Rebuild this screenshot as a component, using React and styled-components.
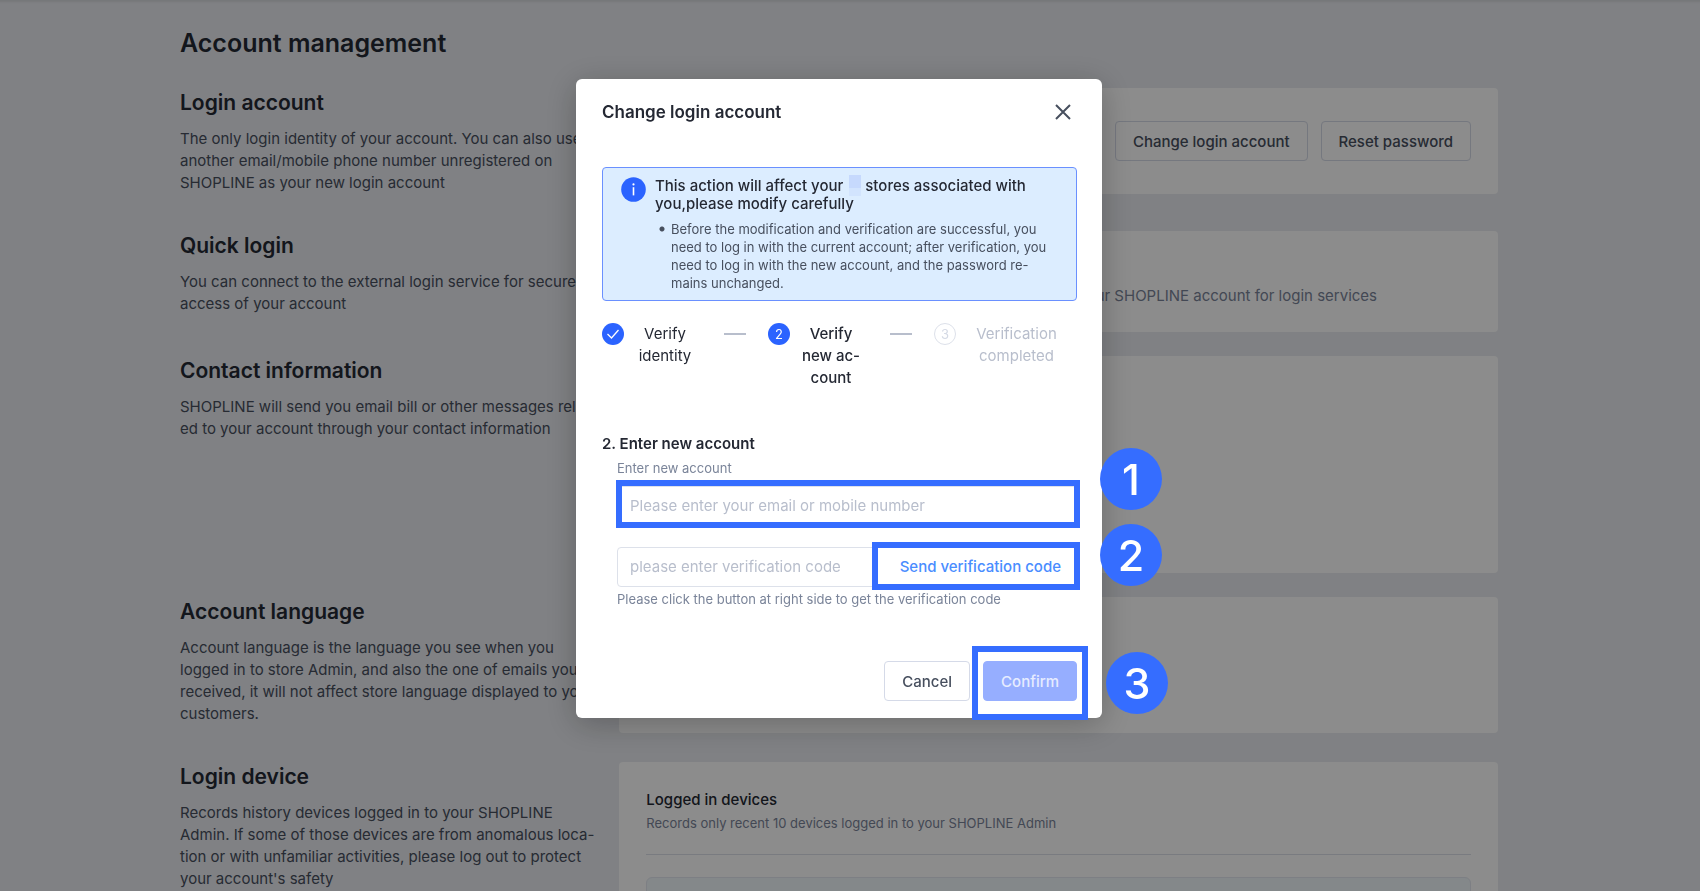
import styled, { createGlobalStyle, css } from "styled-components";

const sections = [
  {
    title: "Login account",
    lines: [
      "The only login identity of your account. You can also use",
      "another email/mobile phone number unregistered on",
      "SHOPLINE as your new login account",
    ],
    content: "login",
    height: 106,
  },
  {
    title: "Quick login",
    lines: [
      "You can connect to the external login service for secure",
      "access of your account",
    ],
    content: "quick",
    height: 101,
  },
  {
    title: "Contact information",
    lines: [
      "SHOPLINE will send you email bill or other messages relat-",
      "ed to your account through your contact information",
    ],
    height: 217,
  },
  {
    title: "Account language",
    lines: [
      "Account language is the language you see when you",
      "logged in to store Admin, and also the one of emails you",
      "received, it will not affect store language displayed to your",
      "customers.",
    ],
    height: 136,
  },
  {
    title: "Login device",
    lines: [
      "Records history devices logged in to your SHOPLINE",
      "Admin. If some of those devices are from anomalous loca-",
      "tion or with unfamiliar activities, please log out to protect",
      "your account's safety",
    ],
    content: "devices",
    height: 320,
  },
];

const steps = [
  { label: "Verify\nidentity", status: "done" },
  { label: "Verify\nnew ac-\ncount", status: "active" },
  { label: "Verification\ncompleted", status: "waiting" },
];

const CardContent = ({ type }) => {
  if (type === "login") {
    return (
      <CardActions>
        <Button type="button">Change login account</Button>
        <Button type="button">Reset password</Button>
      </CardActions>
    );
  }
  if (type === "quick") {
    return (
      <ServiceText>
        Connect an external account to your SHOPLINE account for login services
      </ServiceText>
    );
  }
  if (type === "devices") {
    return (
      <>
        <DevicesTitle>Logged in devices</DevicesTitle>
        <DevicesText>
          Records only recent 10 devices logged in to your SHOPLINE Admin
        </DevicesText>
        <Divider />
        <DevicesBox />
      </>
    );
  }
  return null;
};

const ChangeAccountModal = () => (
  <Modal role="dialog" aria-modal="true" aria-labelledby="modal-title">
    <ModalHeader>
      <ModalTitle id="modal-title">Change login account</ModalTitle>
      <CloseButton type="button" aria-label="Close">
        <svg width="16" height="16" viewBox="0 0 16 16" fill="none">
          <path d="M1 1l14 14M15 1L1 15" stroke="#474f5e" strokeWidth="2" />
        </svg>
      </CloseButton>
    </ModalHeader>
    <Alert>
      <svg width="25" height="25" viewBox="0 0 25 25" fill="none">
        <circle cx="12.5" cy="12.5" r="12.3" fill="#2b63ff" />
        <circle cx="12.5" cy="7.4" r="1.1" fill="#fff" />
        <path d="M12.5 10.2v8.2" stroke="#fff" strokeWidth="1.6" />
      </svg>
      <div>
        <AlertTitle>
          This action will affect your <Redacted /> stores associated with
          <br />
          you,please modify carefully
        </AlertTitle>
        <AlertList>
          <li>
            Before the modification and verification are successful, you
            <br />
            need to log in with the current account; after verification, you
            <br />
            need to log in with the new account, and the password re-
            <br />
            mains unchanged.
          </li>
        </AlertList>
      </div>
    </Alert>
    <Steps>
      {steps.map(({ label, status }, index) => (
        <Step key={label}>
          <StepIcon $status={status}>
            {status === "done" ? (
              <svg width="14" height="12" viewBox="0 0 14 12" fill="none">
                <path d="M1.5 6l4 4L12.5 2" stroke="#fff" strokeWidth="1.3" />
              </svg>
            ) : (
              index + 1
            )}
          </StepIcon>
          <StepLabel $status={status}>{label}</StepLabel>
          {index < steps.length - 1 && <StepLine />}
        </Step>
      ))}
    </Steps>
    <FormTitle>2. Enter new account</FormTitle>
    <Form>
      <Label htmlFor="account">Enter new account</Label>
      <Field>
        <Input
          id="account"
          type="text"
          placeholder="Please enter your email or mobile number"
        />
        <Frame $inset="-6px -3px -2px -1px" />
        <Marker $top={-38} $right={-85}>
          1
        </Marker>
      </Field>
      <CodeField>
        <Input
          type="text"
          aria-label="Verification code"
          aria-describedby="code-help"
          placeholder="please enter verification code"
          $joined
        />
        <Highlighted>
          <SendButton type="button">Send verification code</SendButton>
          <Frame $inset="-5px -3px -3px -6px" />
          <Marker $top={-23} $right={-85}>
            2
          </Marker>
        </Highlighted>
      </CodeField>
      <HelpText id="code-help">
        Please click the button at right side to get the verification code
      </HelpText>
    </Form>
    <ModalFooter>
      <Button type="button">Cancel</Button>
      <Highlighted>
        <Button type="button" $primary>
          Confirm
        </Button>
        <Frame $inset="-15px -11px -19px -11px" />
        <Marker $top={-9} $right={-91}>
          3
        </Marker>
      </Highlighted>
    </ModalFooter>
  </Modal>
);

export default function App() {
  return (
    <>
      <GlobalStyle />
      <Page>
        <Container>
          <PageTitle>Account management</PageTitle>
          {sections.map(({ title, lines, content, height }) => (
            <Section key={title}>
              <SectionInfo>
                <SectionTitle>{title}</SectionTitle>
                <SectionText>{lines.join("\n")}</SectionText>
              </SectionInfo>
              <Card $height={height}>
                <CardContent type={content} />
              </Card>
            </Section>
          ))}
        </Container>
      </Page>
      <Overlay>
        <ChangeAccountModal />
      </Overlay>
    </>
  );
}

const GlobalStyle = createGlobalStyle`
  * {
    box-sizing: border-box;
  }
  body {
    margin: 0;
    overflow: hidden;
    background: #e9ebf0;
    color: #474f5e;
    font-family: Inter, "Liberation Sans", sans-serif;
    font-size: 15px;
    line-height: 22px;
  }
  h1, h2, h3, p, ul {
    margin: 0;
  }
  button, input {
    font: inherit;
  }
`;

const Page = styled.main`
  height: 100vh;
  overflow: hidden;
  padding-right: 22px;
  box-shadow: inset 0 4px 2px -2px rgba(0, 0, 0, 0.08);
`;

const Container = styled.div`
  max-width: 1318px;
  margin: 0 auto;
  padding-top: 27px;
`;

const PageTitle = styled.h1`
  margin-bottom: 29px;
  color: #242833;
  font-size: 25px;
  font-weight: 600;
  line-height: 32px;
`;

const Section = styled.section`
  display: grid;
  grid-template-columns: 1fr 2fr;
  align-items: start;
  margin-bottom: 24px;
`;

const SectionInfo = styled.div`
  padding-bottom: 13px;
`;

const SectionTitle = styled.h2`
  margin-bottom: 10px;
  color: #242833;
  font-size: 21px;
  font-weight: 600;
  line-height: 30px;
`;

const SectionText = styled.p`
  white-space: pre;
`;

const Card = styled.div`
  min-width: 0;
  min-height: ${({ $height }) => $height}px;
  padding: 27px 27px 20px;
  border-radius: 4px;
  background: #fff;
`;

const CardActions = styled.div`
  display: flex;
  justify-content: flex-end;
  gap: 13px;
  padding: 6px 0;
`;

const ServiceText = styled.p`
  padding: 27px 94px 0 0;
  color: #7a8499;
  text-align: right;
  white-space: nowrap;
`;

const DevicesTitle = styled.h3`
  color: #242833;
  font-size: 15px;
  font-weight: 500;
`;

const DevicesText = styled.p`
  margin-top: 3px;
  color: #7a8499;
  font-size: 13px;
  line-height: 18px;
`;

const Divider = styled.hr`
  height: 1px;
  margin: 22px 0;
  border: 0;
  background: #dde1ea;
`;

const DevicesBox = styled.div`
  height: 120px;
  border: 1px solid #e4e8f0;
  border-radius: 6px;
  background: #f0f7fc;
`;

const Overlay = styled.div`
  position: fixed;
  inset: 0;
  display: flex;
  justify-content: center;
  align-items: flex-start;
  padding: 79px 22px 0 0;
  background: rgba(0, 0, 0, 0.45);
`;

const Modal = styled.div`
  width: 526px;
  padding: 22px 25px 17px 26px;
  border-radius: 6px;
  background: #fff;
  box-shadow: 0 6px 32px rgba(0, 0, 0, 0.25);
`;

const ModalHeader = styled.div`
  display: flex;
  justify-content: space-between;
  align-items: center;
  margin-bottom: 44px;
`;

const ModalTitle = styled.h2`
  color: #242833;
  font-size: 17px;
  font-weight: 600;
  line-height: 22px;
`;

const CloseButton = styled.button`
  display: flex;
  padding: 3px 6px;
  border: 0;
  background: none;
`;

const Alert = styled.div`
  display: flex;
  gap: 9px;
  padding: 9px 18px 8px;
  border: 1px solid #6a90ff;
  border-radius: 4px;
  background: #dcedff;
  > svg {
    flex: none;
  }
`;

const AlertTitle = styled.h3`
  color: #242833;
  font-size: 15px;
  font-weight: 500;
  line-height: 18px;
  white-space: nowrap;
`;

const Redacted = styled.span`
  display: inline-block;
  width: 12px;
  height: 21px;
  margin: -6px 0 -4px 2px;
  background: linear-gradient(#c6d9fd 60%, #d2e4fe 60%);
  vertical-align: middle;
`;

const AlertList = styled.ul`
  margin-top: 7px;
  padding: 0;
  font-size: 13px;
  line-height: 18px;
  list-style: none;
  white-space: nowrap;
  li {
    display: flow-root;
    padding-left: 16px;
    background: radial-gradient(
      circle at 7px 9px,
      #474f5e 2px,
      transparent 3px
    );
  }
`;

const Steps = styled.div`
  display: flex;
  margin-top: 22px;
`;

const Step = styled.div`
  display: flex;
  align-items: flex-start;
  &:last-child {
    flex: 1;
  }
`;

const StepIcon = styled.span`
  display: flex;
  flex: none;
  align-items: center;
  justify-content: center;
  width: 22px;
  height: 22px;
  border-radius: 50%;
  background: #2b63ff;
  color: #fff;
  font-size: 13px;
  ${({ $status }) =>
    $status === "waiting" &&
    css`
      border: 1px solid #dde1ea;
      background: #fff;
      color: #d5dae5;
    `}
`;

const StepLabel = styled.span`
  width: 82px;
  color: ${({ $status }) => ($status === "waiting" ? "#b8becc" : "#242833")};
  font-weight: ${({ $status }) => ($status === "active" ? 500 : 400)};
  text-align: center;
  white-space: pre;
  ${Step}:last-child & {
    flex: 1;
  }
`;

const StepLine = styled.span`
  width: 22px;
  height: 2px;
  margin: 10px 22px 0 18px;
  background: #b8becc;
`;

const FormTitle = styled.h3`
  margin-top: 44px;
  color: #242833;
  font-size: 15px;
  font-weight: 600;
`;

const Form = styled.div`
  padding-left: 15px;
`;

const Label = styled.label`
  display: block;
  margin: 4px 0 9px;
  color: #7a8499;
  font-size: 13px;
  line-height: 18px;
`;

const Field = styled.div`
  position: relative;
  display: flex;
`;

const CodeField = styled.div`
  display: flex;
  margin-top: 21px;
`;

const Input = styled.input`
  flex: 1;
  min-width: 0;
  height: 40px;
  padding: 0 12px 2px;
  border: 1px solid #dde1ea;
  border-radius: ${({ $joined }) => ($joined ? "4px 0 0 4px" : "4px")};
  outline: none;
  &::placeholder {
    color: #b8becc;
    opacity: 1;
  }
`;

const Highlighted = styled.div`
  position: relative;
  display: flex;
`;

const SendButton = styled.button`
  width: 199px;
  height: 40px;
  padding: 0 15px;
  border: 1px solid #dde1ea;
  border-left: 0;
  background: #fff;
  color: #4a8dff;
  font-weight: 500;
  text-align: right;
  white-space: nowrap;
`;

const HelpText = styled.p`
  margin-top: 3px;
  color: #7a8499;
  font-size: 13px;
  line-height: 18px;
`;

const ModalFooter = styled.div`
  display: flex;
  justify-content: flex-end;
  gap: 13px;
  margin-top: 53px;
`;

const Button = styled.button`
  height: 40px;
  padding: 2px 17px 0;
  border: 1px solid ${({ $primary }) => ($primary ? "#96aeff" : "#d5dae8")};
  border-radius: 4px;
  background: ${({ $primary }) => ($primary ? "#96aeff" : "#fff")};
  color: ${({ $primary }) => ($primary ? "#e6ecff" : "#474f5e")};
  font-weight: 500;
  white-space: nowrap;
`;

const Frame = styled.span`
  position: absolute;
  inset: ${({ $inset }) => $inset};
  border: 6px solid #356dff;
  pointer-events: none;
`;

const Marker = styled.span`
  position: absolute;
  top: ${({ $top }) => $top}px;
  right: ${({ $right }) => $right}px;
  display: flex;
  align-items: center;
  justify-content: center;
  width: 62px;
  height: 62px;
  border-radius: 50%;
  background: #356dff;
  color: #fff;
  font-size: 43px;
  font-weight: 500;
`;
